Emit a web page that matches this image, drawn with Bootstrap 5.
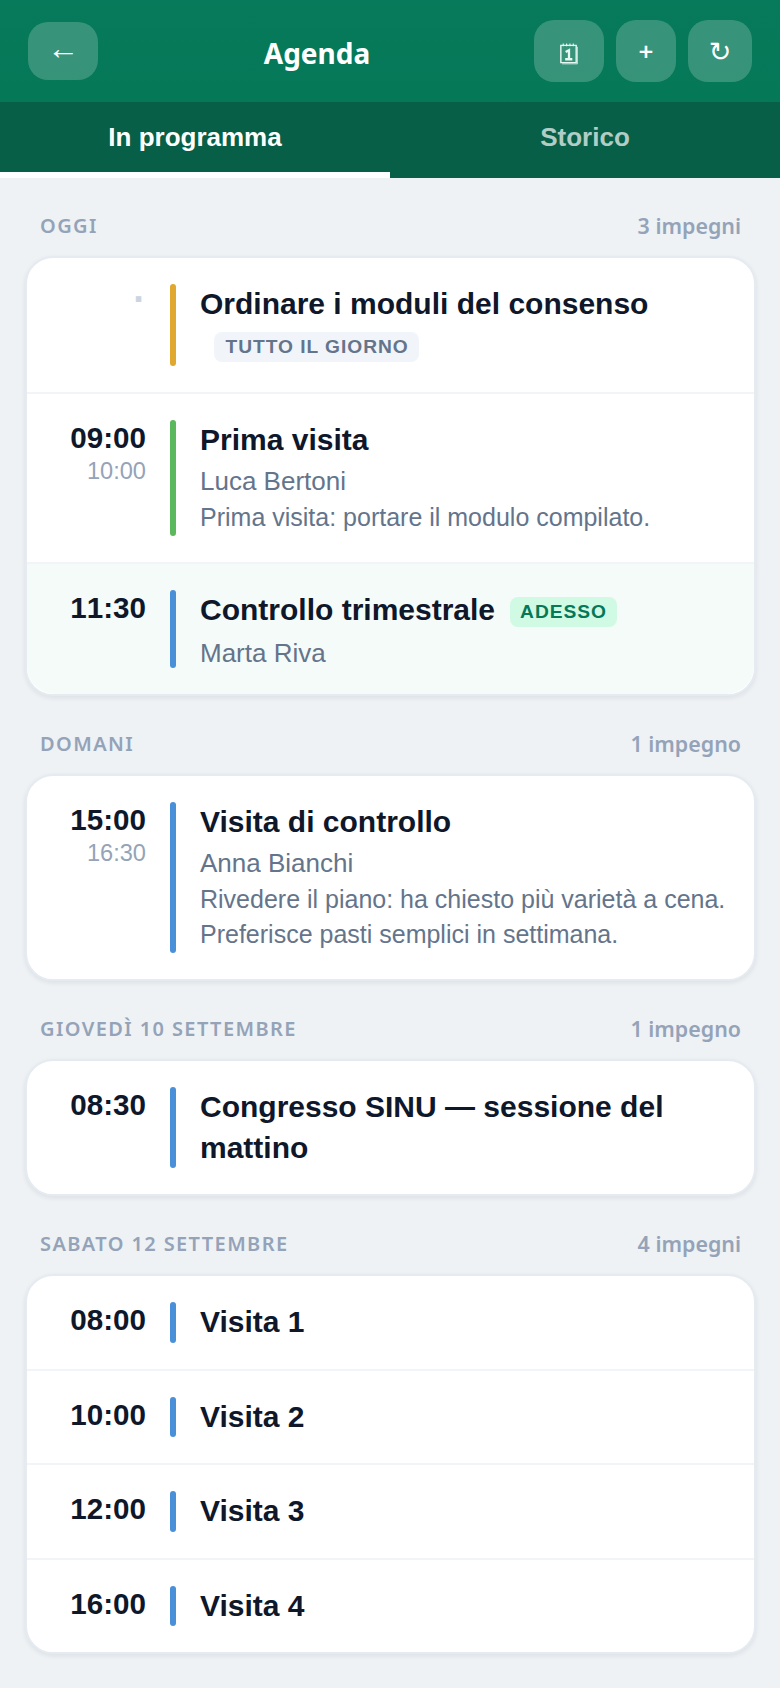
<!DOCTYPE html>
<html lang="it">
<head>
    <meta charset="UTF-8">
    <meta name="viewport" content="width=device-width, initial-scale=1.0">
    <title>Agenda</title>
    <link href="https://cdn.jsdelivr.net/npm/bootstrap@5.3.0/dist/css/bootstrap.min.css" rel="stylesheet">
    <style>
        body {
            font-family: "Liberation Sans", Arial, sans-serif;
            background-color: #eef2f5;
            color: #0f172a;
        }

        /* header */
        .app-top {
            height: 102px;
            padding: 20px 28px;
            background: linear-gradient(180deg, #067a5a, #047857);
        }
        .top-acts { gap: 12px; }
        .top-btn {
            display: flex;
            align-items: center;
            justify-content: center;
            height: 62px;
            padding: 0;
            border: 0;
            border-radius: 20px;
            background-color: rgba(255, 255, 255, .2);
            color: #fff;
            font-size: 30px;
            line-height: 1;
        }
        .top-btn:hover { background-color: rgba(255, 255, 255, .3); color: #fff; }
        .btn-back { width: 70px; height: 58px; padding-bottom: 6px; font-size: 32px; }
        .btn-cal { width: 70px; }
        .btn-cal svg { margin-top: 5px; }
        .btn-plus { width: 60px; font-family: "Noto Sans", sans-serif; font-weight: 600; font-size: 26px; }
        .btn-sync { width: 64px; font-family: "DejaVu Sans", sans-serif; font-size: 27px; }
        .top-name {
            margin: 0;
            padding: 6px 0 0 2px;
            font-family: "Noto Sans", sans-serif;
            font-size: 28px;
            font-weight: 700;
            color: #fff;
        }

        /* tabs */
        .tab-bar { background-color: #065f46; height: 76px; }
        .tab-bar .nav-link {
            height: 76px;
            padding: 0;
            border: 0;
            border-bottom: 6px solid transparent;
            border-radius: 0;
            background: none;
            color: rgba(255, 255, 255, .7);
            font-size: 26px;
            font-weight: 700;
        }
        .tab-bar .nav-link.active { color: #fff; border-bottom-color: #fff; }

        /* days */
        .day-list { padding: 18px 24px 0 25px; }
        .day-wrap { margin-bottom: 18px; }
        .day-head {
            height: 60px;
            padding: 0 15px;
            font-family: "Noto Sans", sans-serif;
            color: #94a3b8;
        }
        .day-name { font-size: 20px; font-weight: 600; letter-spacing: 1.4px; }
        .day-count { font-size: 21.4px; font-weight: 600; }
        .day-card {
            overflow: hidden;
            border: 2px solid #e6ebf2;
            border-radius: 28px;
            box-shadow: 0 2px 5px rgba(15, 23, 42, .08);
        }
        .day-card .list-group-item {
            padding: 26px;
            border-color: #f1f5f9;
            border-width: 0 0 2px;
            background: none;
            color: #0f172a;
        }
        .day-card .list-group-item:last-child { border-bottom: 0; }
        .day-card .row-now { background-color: #f5fbf8; }

        .ev-time { width: 93px; text-align: right; }
        .ev-start { font-size: 29.6px; font-weight: 700; line-height: 36px; font-kerning: none; }
        .ev-end { font-size: 23.6px; line-height: 30px; color: #94a3b8; }
        .ev-dot { font-size: 38px; font-weight: 700; line-height: 30px; color: #cbd5e1; }
        .ev-bar { flex: 0 0 6px; width: 6px; margin: 0 24px; border-radius: 3px; }
        .bar-gold { background-color: #e0a82e; }
        .bar-green { background-color: #5cb85c; }
        .bar-blue { background-color: #4a90d9; }
        .ev-title { font-size: 30px; font-weight: 700; line-height: 40.5px; }
        .ev-title.has-tag { padding-bottom: 1px; }
        .row-now .ev-title { padding-bottom: 2px; }
        .ev-who { margin-top: 5.5px; font-size: 26px; line-height: 30px; color: #64748b; }
        .ev-note { margin-top: 3.5px; padding-bottom: 1.5px; font-size: 25px; line-height: 35px; color: #64748b; }
        .tag-pill {
            display: inline-block;
            margin-left: 14px;
            padding: 0 10px;
            border-radius: 8px;
            font-size: 19.2px;
            font-weight: 700;
            line-height: 30px;
            letter-spacing: .96px;
            vertical-align: middle;
        }
        .tag-all { background-color: #f1f5f9; color: #64748b; padding-left: 11.5px; }
        .tag-now { background-color: #d1fae5; color: #047857; margin-left: 15px; }
    </style>
</head>
<body>
    <header class="app-top d-flex align-items-center">
        <button class="btn top-btn btn-back" type="button">←</button>
        <h1 class="top-name flex-grow-1 text-center">Agenda</h1>
        <div class="d-flex top-acts">
            <button class="btn top-btn btn-cal" type="button" aria-label="Calendario">
                <svg width="20" height="23" viewBox="0 0 20 24" fill="none" stroke="#e6f7f1" stroke-width="1.5">
                    <path d="M1.5 3.5h16v18h-16z"/>
                    <path d="M18.8 5v17.8h-16" stroke-width=".8"/>
                    <path d="M4 1.5v3M7.5 1.5v3M11 1.5v3M14.5 1.5v3" stroke-width="1.2"/>
                    <path d="M6.5 10.5l3.5-2v10M6 18h7.5" stroke-width="2.4"/>
                </svg>
            </button>
            <button class="btn top-btn btn-plus" type="button" aria-label="Nuovo">+</button>
            <button class="btn top-btn btn-sync" type="button" aria-label="Aggiorna">↻</button>
        </div>
    </header>

    <ul class="nav nav-justified tab-bar">
        <li class="nav-item"><button class="nav-link active w-100" type="button">In programma</button></li>
        <li class="nav-item"><button class="nav-link w-100" type="button">Storico</button></li>
    </ul>

    <main class="day-list" id="agenda"></main>

    <script src="https://cdn.jsdelivr.net/npm/bootstrap@5.3.0/dist/js/bootstrap.bundle.min.js"></script>
    <script>
        const days = [
            { name: 'OGGI', count: '3 impegni', items: [
                { title: 'Ordinare i moduli del consenso', bar: 'gold', tag: 'TUTTO IL GIORNO' },
                { start: '09:00', end: '10:00', title: 'Prima visita', bar: 'green', who: 'Luca Bertoni', note: 'Prima visita: portare il modulo compilato.' },
                { start: '11:30', title: 'Controllo trimestrale', bar: 'blue', who: 'Marta Riva', now: true }
            ] },
            { name: 'DOMANI', count: '1 impegno', items: [
                { start: '15:00', end: '16:30', title: 'Visita di controllo', bar: 'blue', who: 'Anna Bianchi', note: 'Rivedere il piano: ha chiesto più varietà a cena. Preferisce pasti semplici in settimana.' }
            ] },
            { name: 'GIOVEDÌ 10 SETTEMBRE', count: '1 impegno', items: [
                { start: '08:30', title: 'Congresso SINU — sessione del mattino', bar: 'blue' }
            ] },
            { name: 'SABATO 12 SETTEMBRE', count: '4 impegni', items: [
                { start: '08:00', title: 'Visita 1', bar: 'blue' },
                { start: '10:00', title: 'Visita 2', bar: 'blue' },
                { start: '12:00', title: 'Visita 3', bar: 'blue' },
                { start: '16:00', title: 'Visita 4', bar: 'blue' }
            ] }
        ]

        function rowHtml(e) {
            const time = e.start
                ? `<div class="ev-start">${e.start}</div>` + (e.end ? `<div class="ev-end">${e.end}</div>` : '')
                : '<div class="ev-dot">·</div>'
            let body = e.title
            if (e.tag) body += `<span class="tag-pill tag-all">${e.tag}</span>`
            if (e.now) body += `<span class="tag-pill tag-now">ADESSO</span>`
            return `<li class="list-group-item d-flex ${e.now ? 'row-now' : ''}">
                <div class="ev-time flex-shrink-0">${time}</div>
                <div class="ev-bar bar-${e.bar}"></div>
                <div class="flex-grow-1">
                    <div class="ev-title ${e.tag ? 'has-tag' : ''}">${body}</div>
                    ${e.who ? `<div class="ev-who">${e.who}</div>` : ''}
                    ${e.note ? `<div class="ev-note">${e.note}</div>` : ''}
                </div>
            </li>`
        }

        document.getElementById('agenda').innerHTML = days.map(d => `
            <section class="day-wrap">
                <div class="day-head d-flex justify-content-between align-items-center">
                    <span class="day-name">${d.name}</span>
                    <span class="day-count">${d.count}</span>
                </div>
                <ul class="list-group day-card bg-white">${d.items.map(rowHtml).join('')}</ul>
            </section>
        `).join('')
    </script>
</body>
</html>
